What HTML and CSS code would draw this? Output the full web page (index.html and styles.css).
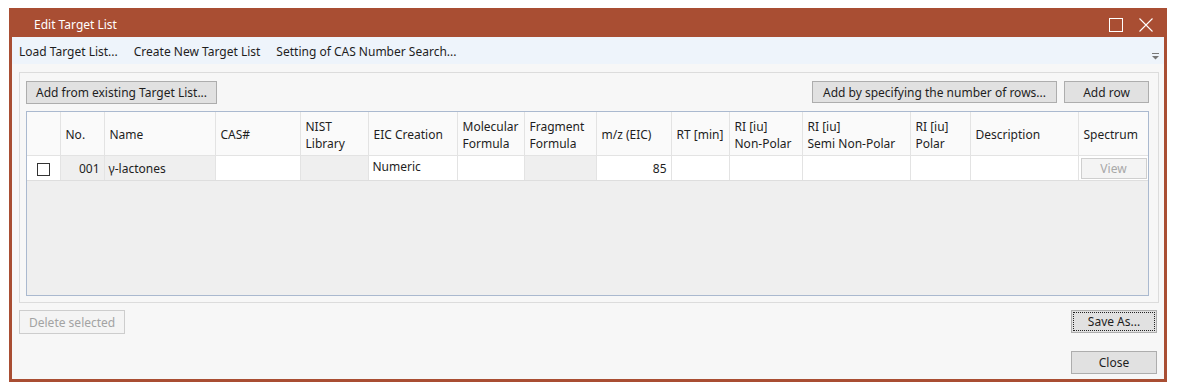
FILE: index.html
```html
<!DOCTYPE html>
<html lang="en">
<head>
  <meta charset="UTF-8" />
  <title>Edit Target List</title>
  <link rel="stylesheet" href="styles.css">
</head>
<body>
  <div class="window">
    <!-- Title bar -->
    <div class="titlebar">
      <span class="title">Edit Target List</span>
      <div class="caption-buttons">
        <svg class="cap-btn" width="14" height="14" viewBox="0 0 14 14"><rect x="0.5" y="0.5" width="13" height="13" fill="none" stroke="#fff" stroke-width="1"/></svg>
        <svg class="cap-btn" width="14" height="14" viewBox="0 0 14 14"><path d="M0.5 0.5 L13.5 13.5 M13.5 0.5 L0.5 13.5" stroke="#fff" stroke-width="1.1"/></svg>
      </div>
    </div>

    <div class="client">
      <!-- Menu -->
      <div class="menubar">
        <span class="menu-item">Load Target List...</span>
        <span class="menu-item">Create New Target List</span>
        <span class="menu-item">Setting of CAS Number Search...</span>
        <svg class="grip" width="7" height="7" viewBox="0 0 7 7"><rect x="0" y="0" width="7" height="1" fill="#777"/><path d="M0 3 L7 3 L3.5 6.5 Z" fill="#777"/></svg>
      </div>

      <!-- Group box -->
      <div class="groupbox">
        <div class="toolbar">
          <button class="btn">Add from existing Target List...</button>
          <div class="spacer"></div>
          <button class="btn btn-wide">Add by specifying the number of rows...</button>
          <button class="btn btn-addrow">Add row</button>
        </div>

        <div class="grid">
          <table>
            <colgroup>
              <col style="width:33px"><col style="width:44px"><col style="width:111px"><col style="width:85px">
              <col style="width:68px"><col style="width:89px"><col style="width:67px"><col style="width:72px">
              <col style="width:75px"><col style="width:58px"><col style="width:73px"><col style="width:108px">
              <col style="width:60px"><col style="width:108px"><col style="width:70px">
            </colgroup>
            <thead>
              <tr>
                <th></th>
                <th>No.</th>
                <th>Name</th>
                <th>CAS#</th>
                <th>NIST<br>Library</th>
                <th>EIC Creation</th>
                <th>Molecular<br>Formula</th>
                <th>Fragment<br>Formula</th>
                <th>m/z (EIC)</th>
                <th>RT [min]</th>
                <th>RI [iu]<br>Non-Polar</th>
                <th>RI [iu]<br>Semi Non-Polar</th>
                <th>RI [iu]<br>Polar</th>
                <th>Description</th>
                <th>Spectrum</th>
              </tr>
            </thead>
            <tbody>
              <tr>
                <td class="check-cell"><span class="checkbox"></span></td>
                <td class="ro num">001</td>
                <td class="ro">γ-lactones</td>
                <td></td>
                <td class="ro"></td>
                <td class="combo">Numeric</td>
                <td></td>
                <td class="ro"></td>
                <td class="num">85</td>
                <td></td>
                <td></td>
                <td></td>
                <td></td>
                <td></td>
                <td class="view-cell"><button class="btn-view">View</button></td>
              </tr>
            </tbody>
          </table>
        </div>
      </div>

      <!-- Footer -->
      <div class="footer">
        <button class="btn btn-disabled">Delete selected</button>
        <div class="footer-right">
          <button class="btn btn-dialog focused">Save As...</button>
          <button class="btn btn-dialog">Close</button>
        </div>
      </div>
    </div>
  </div>
</body>
</html>
```

FILE: styles.css
```css
body {
  margin: 0;
  background: #fff;
  font-family: "Noto Sans", "Open Sans", sans-serif;
  font-size: 12px;
  color: #1e1e1e;
}
.window {
  margin: 8px 0 0 9px;
  width: 1158px;
  height: 374px;
  box-sizing: border-box;
  background: #a94e33;
  padding: 0 3px 3px 3px;
  display: flex;
  flex-direction: column;
}
.titlebar {
  height: 29px;
  box-sizing: border-box;
  padding-top: 4px;
  display: flex;
  align-items: center;
  color: #fff;
  flex-shrink: 0;
}
.title {
  margin-left: 22px;
  font-size: 12px;
}
.caption-buttons {
  margin-left: auto;
  display: flex;
  gap: 16px;
  margin-right: 11px;
}
.client {
  flex: 1;
  background: #f7f7f7;
  display: flex;
  flex-direction: column;
}
.menubar {
  height: 27px;
  box-sizing: border-box;
  padding-top: 2px;
  background: #eef4fb;
  display: flex;
  align-items: center;
  padding-left: 7px;
  gap: 16px;
  position: relative;
}
.grip {
  position: absolute;
  right: 5px;
  bottom: 4px;
}
.groupbox {
  margin: 8px 5px 0 7px;
  height: 231px;
  box-sizing: border-box;
  border: 1px solid #dcdcdc;
  padding: 8px 9px 6px 6px;
  display: flex;
  flex-direction: column;
}
.toolbar {
  display: flex;
  align-items: flex-start;
  gap: 7px;
  height: 30px;
}
.spacer {
  flex: 1;
}
.btn {
  font-family: inherit;
  font-size: 12px;
  color: #1e1e1e;
  background: #e1e1e1;
  border: 1px solid #adadad;
  height: 23px;
  padding: 0 9px;
  margin: 0;
  line-height: 19px;
}
.btn-wide {
  width: 245px;
  height: 22px;
}
.btn-addrow {
  width: 85px;
  height: 22px;
}
.grid {
  flex: 1;
  border: 1px solid #aab9cf;
  background: #efefef;
  overflow: hidden;
}
table {
  border-collapse: collapse;
  table-layout: fixed;
  width: 1121px;
}
th {
  height: 41px;
  background: #fafafa;
  font-weight: normal;
  text-align: left;
  padding: 2px 5px 0 5px;
  line-height: 17px;
  border-right: 1px solid #e3e3e3;
  border-bottom: 1px solid #e3e3e3;
  white-space: nowrap;
  overflow: hidden;
  vertical-align: middle;
}
td {
  height: 25px;
  box-sizing: border-box;
  background: #fff;
  padding: 0 4px;
  border-right: 1px solid #e3e3e3;
  border-bottom: 1px solid #dedede;
  white-space: nowrap;
  overflow: hidden;
}
td.ro {
  background: #efefef;
}
td.num {
  text-align: right;
}
td.combo {
  vertical-align: top;
  padding-top: 2px;
}
.check-cell {
  text-align: center;
}
.checkbox {
  display: inline-block;
  width: 11px;
  height: 11px;
  border: 1px solid #333;
  background: #fff;
  vertical-align: middle;
}
.view-cell {
  padding: 0 2px;
}
.btn-view {
  width: 66px;
  height: 21px;
  font-family: inherit;
  font-size: 12px;
  color: #a8a8a8;
  background: #f4f4f4;
  border: 1px solid #cfcfcf;
  padding: 0;
  vertical-align: middle;
}
.footer {
  flex: 1;
  display: flex;
  justify-content: space-between;
  padding: 7px 7px 5px 7px;
}
.btn-disabled {
  height: 24px;
  background: #f4f4f4;
  border-color: #cdcdcd;
  color: #a3a3a3;
}
.footer-right {
  display: flex;
  flex-direction: column;
  justify-content: space-between;
}
.btn-dialog {
  width: 86px;
  height: 23px;
}
.btn-dialog.focused {
  outline: 1px dotted #222;
  outline-offset: -3px;
}
```
